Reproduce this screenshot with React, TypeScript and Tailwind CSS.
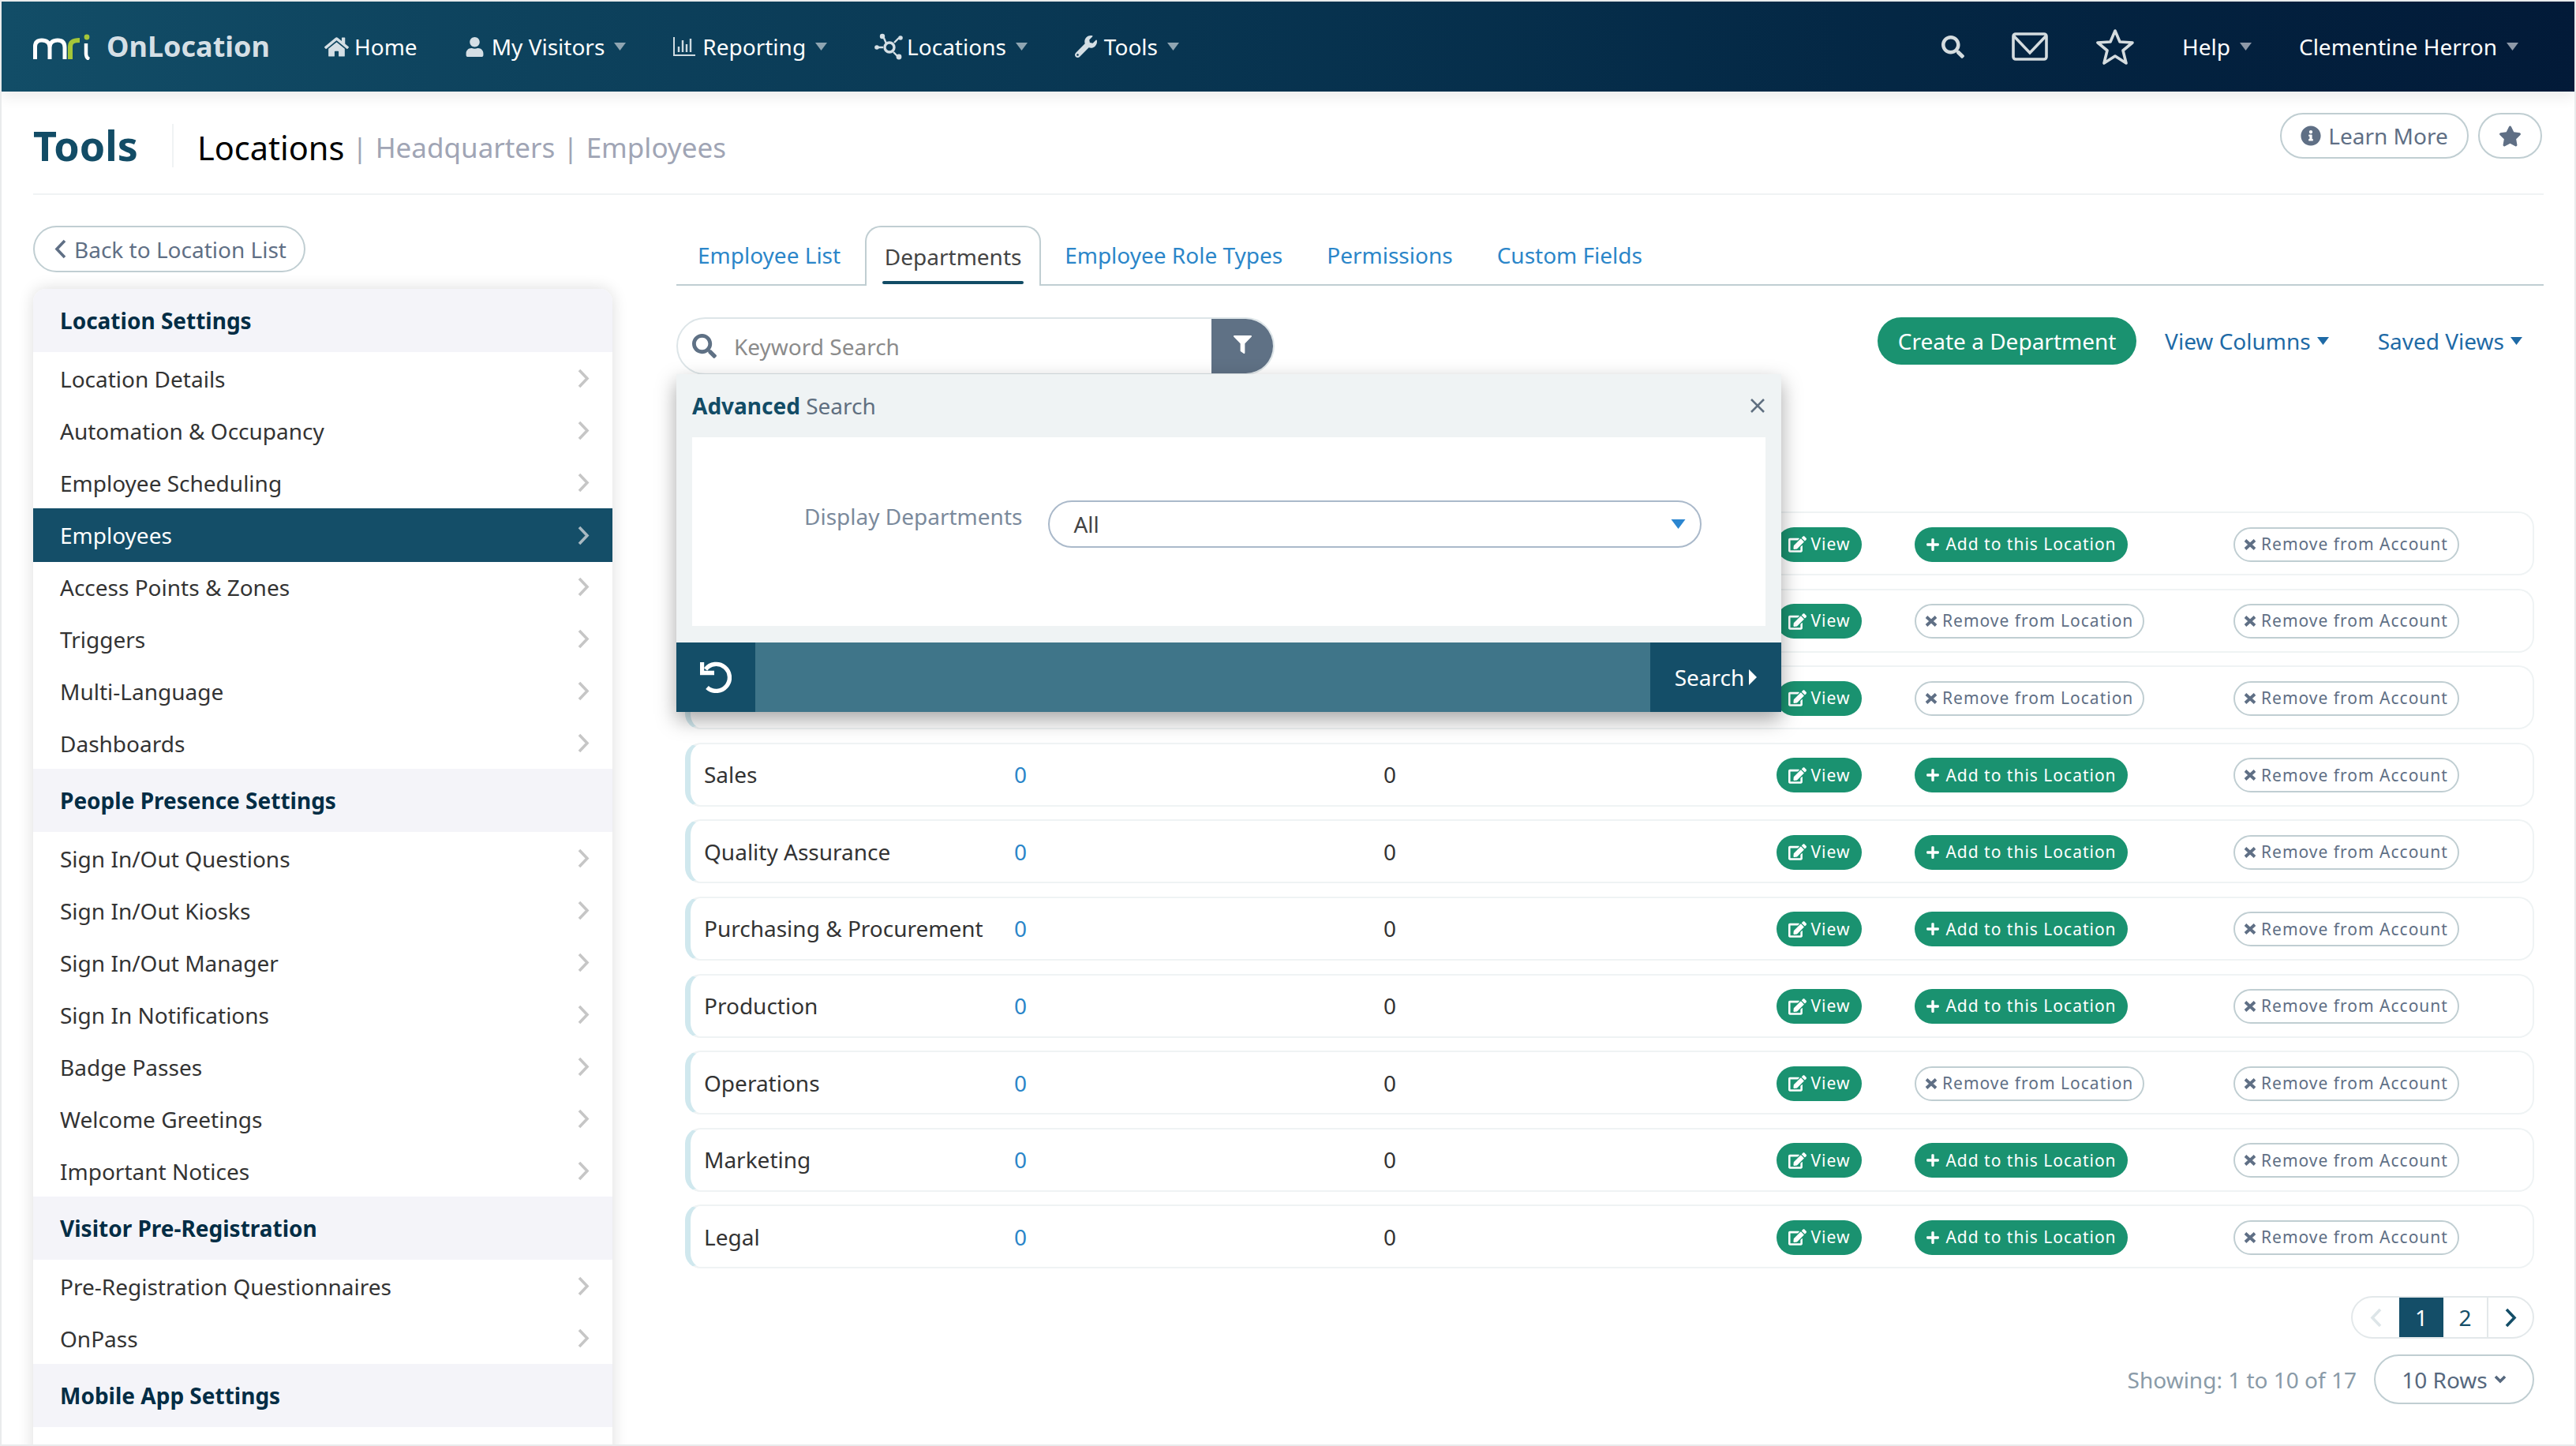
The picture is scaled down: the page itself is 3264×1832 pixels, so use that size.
import { FaEdit, FaFilter, FaHome, FaInfoCircle, FaPlus, FaSearch, FaStar, FaUser, FaWrench } from "react-icons/fa";

const Caret = ({ className }: { className: string }) => (
  <svg width="15" height="10" viewBox="0 0 15 10" className={className}>
    <path d="M0 0H15L7.5 10Z" fill="currentColor" />
  </svg>
);

const Angle = ({ className, left }: { className?: string; left?: boolean }) => (
  <svg width="16" height="25" viewBox="0 0 16 25" className={className}>
    <path d={left ? "M13 2L3 12.5L13 23" : "M3 2L13 12.5L3 23"} fill="none" stroke="currentColor" strokeWidth="3.6" />
  </svg>
);

const Logo = () => (
  <svg width="72" height="34" viewBox="0 0 72 34" fill="none">
    <path d="M2.5 33V17C2.5 11 6 9 11 9C17 9 21 12 21 18V33M21 18C21 12 25 9 31 9C37 9 40 12 40 18V33" stroke="#fff" strokeWidth="5" />
    <path d="M47 33V17C47 11 51 9 59 9" stroke="#a4c639" strokeWidth="6" />
    <path d="M67 13V26Q67 31 71 33" stroke="#fff" strokeWidth="4.5" />
    <circle cx="68" cy="5" r="3.4" fill="#a4c639" />
  </svg>
);

const ReportIcon = () => (
  <svg width="28" height="26" viewBox="0 0 28 26" fill="none" stroke="#cfdbe1" strokeWidth="2">
    <path d="M1 1V24H28" />
    <path d="M7 20V13M12 20V5M17 20V10M22 20V3" strokeWidth="2.4" />
  </svg>
);

const NetworkIcon = () => (
  <svg width="38" height="34" viewBox="0 0 38 34" fill="none" stroke="#d5dfe5" strokeWidth="2.4">
    <path d="M11 4L15 13M24 24L29 29M25 12L31 6M4 18H11" />
    <circle cx="19" cy="18" r="6" strokeWidth="3.4" />
    <circle cx="10" cy="4" r="3.2" fill="#d5dfe5" stroke="none" />
    <circle cx="33" cy="6" r="2.8" fill="#d5dfe5" stroke="none" />
    <circle cx="3" cy="18" r="2.8" fill="#d5dfe5" stroke="none" />
    <circle cx="31" cy="30" r="3.4" fill="#d5dfe5" stroke="none" />
  </svg>
);

const MailIcon = () => (
  <svg width="46" height="36" viewBox="0 0 46 36" fill="none" stroke="#d5dcdf" strokeWidth="3.6">
    <rect x="2" y="2" width="42" height="32" rx="3" />
    <path d="M3 5L23 26L43 5" />
  </svg>
);

const StarIcon = () => (
  <svg width="50" height="46" viewBox="0 0 50 46" fill="none" stroke="#d5dcdf" strokeWidth="3.6" strokeLinejoin="round">
    <path d="M25 3L31 17L47 18L35 28L39 44L25 35L11 44L15 28L3 18L19 17Z" />
  </svg>
);

const UndoIcon = () => (
  <svg width="40" height="40" viewBox="0 0 40 40" fill="none" stroke="#fff" strokeWidth="5.4">
    <path d="M2.5 1V14.5H18" />
    <path d="M7 10A17 17 0 1 1 9 33" />
  </svg>
);

const navItems = [
  { label: "Home", icon: <FaHome size={31} color="#d5dfe5" className="ml-[2px] -mr-[2px]" /> },
  { label: "My Visitors", icon: <FaUser size={25} color="#d5dfe5" />, menu: true },
  { label: "Reporting", icon: <ReportIcon />, menu: true },
  { label: "Locations", icon: <NetworkIcon />, menu: true, tight: true },
  { label: "Tools", icon: <FaWrench size={28} color="#d5dfe5" />, menu: true },
];

const sections = [
  {
    title: "Location Settings",
    items: ["Location Details", "Automation & Occupancy", "Employee Scheduling", "Employees", "Access Points & Zones", "Triggers", "Multi-Language", "Dashboards"],
  },
  {
    title: "People Presence Settings",
    items: ["Sign In/Out Questions", "Sign In/Out Kiosks", "Sign In/Out Manager", "Sign In Notifications", "Badge Passes", "Welcome Greetings", "Important Notices"],
  },
  {
    title: "Visitor Pre-Registration",
    items: ["Pre-Registration Questionnaires", "OnPass"],
  },
  { title: "Mobile App Settings", items: [] },
];

const tabs = ["Employee List", "Departments", "Employee Role Types", "Permissions", "Custom Fields"];

const rows = [
  { name: "", added: false },
  { name: "", added: true },
  { name: "", added: true },
  { name: "Sales", added: false },
  { name: "Quality Assurance", added: false },
  { name: "Purchasing & Procurement", added: false },
  { name: "Production", added: false },
  { name: "Operations", added: true },
  { name: "Marketing", added: false },
  { name: "Legal", added: false },
];

const pill = "mt-[2px] flex h-[44px] items-center rounded-full text-[21px] tracking-[1px] whitespace-nowrap";
const outlinePill = `${pill} border-2 border-[#c0ced2] bg-white text-[#5f6f85]`;

const RemoveButton = ({ label }: { label: string }) => (
  <div className={`${outlinePill} w-fit gap-[6px] pl-[11px] pr-[12px]`}>
    <svg width="16" height="14" viewBox="0 0 16 14" fill="none" stroke="currentColor" strokeWidth="3.8">
      <path d="M2 1.5L14 12.5M14 1.5L2 12.5" />
    </svg>
    {label}
  </div>
);

export default function App() {
  return (
    <div className="h-[1832px] w-[3264px] overflow-hidden bg-[#e9ebec] p-[2px] font-['Noto_Sans',sans-serif]">
      <div className="flex h-full flex-col overflow-hidden bg-white">
        <header className="relative z-10 flex h-[114px] shrink-0 items-center justify-between bg-gradient-to-r from-[#124d67] to-[#021a38] pl-[40px] pr-[71px] shadow-[0_8px_16px_rgba(0,0,0,0.07)]">
          <div className="flex items-center">
            <Logo />
            <span className="ml-[21px] w-[206px] text-[36px] font-bold whitespace-nowrap text-[#d5dfe5]">OnLocation</span>
            <nav className="ml-[68px] flex items-center gap-[60px]">
              {navItems.map((item) => (
                <div key={item.label} className="flex items-center text-[28px] text-white">
                  <span className={`flex items-center ${item.tight ? "mr-[3px]" : "mr-[9px]"}`}>{item.icon}</span>
                  {item.label}
                  {item.menu && <Caret className="ml-[12px] text-[#8fa5b2]" />}
                </div>
              ))}
            </nav>
          </div>
          <div className="flex items-center gap-[60px] text-[28px] text-white">
            <FaSearch size={29} color="#d5dcdf" />
            <MailIcon />
            <StarIcon />
            <div className="flex items-center gap-[12px]">
              Help
              <Caret className="text-[#8e99a8]" />
            </div>
            <div className="flex items-center gap-[12px]">
              Clementine Herron
              <Caret className="text-[#8e99a8]" />
            </div>
          </div>
        </header>

        <div className="flex min-h-0 flex-1 flex-col pl-[40px] pr-[39px]">
          <div className="flex h-[131px] shrink-0 items-start justify-between border-b-2 border-[#f0f3f4]">
            <div className="flex items-center pt-[38px]">
              <h1 className="text-[52px] leading-[60px] font-bold text-[#124c66]">Tools</h1>
              <div className="ml-[43px] h-[55px] w-[2px] bg-[#f0f3f4]" />
              <div className="ml-[30px] flex items-center pt-[6px] text-[35px] text-[#a0a5b5]">
                <span className="text-[41.5px] leading-[50px] text-black">Locations</span>
                <span className="mx-[10px]">|</span>
                <span>Headquarters</span>
                <span className="mx-[10px]">|</span>
                <span>Employees</span>
              </div>
            </div>
            <div className="flex gap-[12px] pt-[27px] pr-[2px]">
              <div className="flex h-[58px] w-[239px] items-center justify-center gap-[9px] rounded-full border-2 border-[#c0ced2] text-[28px] text-[#5f6f85]">
                <FaInfoCircle size={26} />
                Learn More
              </div>
              <div className="flex h-[58px] w-[81px] items-center justify-center rounded-full border-2 border-[#c0ced2] text-[#5f6f85]">
                <FaStar size={29} />
              </div>
            </div>
          </div>

          <div className="flex min-h-0 flex-1 gap-[81px] pt-[39px]">
            <aside className="w-[734px] shrink-0">
              <div className="flex h-[59px] w-[345px] items-center gap-[9px] rounded-full border-2 border-[#c0ced2] pl-[25px] text-[28px] text-[#5f6f85]">
                <Angle left className="shrink-0" />
                Back to Location List
              </div>
              <div className="mt-[21px] overflow-hidden rounded-t-[16px] shadow-[0_0_20px_rgba(0,0,0,0.14)]">
                {sections.map((section) => (
                  <div key={section.title}>
                    <div className="flex h-[80px] items-center bg-[#f4f4f9] pl-[34px] text-[28px] font-bold text-[#032d45]">
                      {section.title}
                    </div>
                    {section.items.map((item) => (
                      <div
                        key={item}
                        className={`flex items-center justify-between pl-[34px] pr-[29px] text-[28px] ${item === "Employees" ? "relative -mb-[2px] h-[68px] bg-[#144e68] text-white" : "h-[66px] bg-white pt-[1px] text-[#333]"}`}
                      >
                        {item}
                        <Angle className={item === "Employees" ? "text-[#a9b9c2]" : "text-[#c6c6c6]"} />
                      </div>
                    ))}
                  </div>
                ))}
                <div className="h-[40px] bg-white" />
              </div>
            </aside>

            <main className="min-w-0 flex-1">
              <div className="flex h-[76px] items-end gap-[4px] border-b-2 border-[#c0ced2] text-[28px] text-[#2b86c9]">
                {tabs.map((tab) =>
                  tab === "Departments" ? (
                    <div key={tab} className="relative -mb-[2px] flex h-[76px] w-[223px] items-center justify-center rounded-t-[20px] border-2 border-b-0 border-[#c0ced2] bg-white pb-[1px] text-[#444]">
                      {tab}
                      <div className="absolute right-[20px] bottom-[2px] left-[20px] h-[4px] rounded-[2px] bg-[#124c66]" />
                    </div>
                  ) : (
                    <div key={tab} className="flex h-[74px] items-center px-[26px] pb-[1px] first:px-[27px]">
                      {tab}
                    </div>
                  ),
                )}
              </div>

              <div className="relative mt-[40px] flex h-[73px] items-start justify-between">
                <div className="flex h-[73px] w-[758px] overflow-hidden rounded-full border-2 border-[#dde5e8]">
                  <div className="flex flex-1 items-center gap-[22px] pl-[18px] text-[28px] text-[#8b8b8b]">
                    <FaSearch size={31} color="#5f7185" />
                    Keyword Search
                  </div>
                  <div className="flex w-[78px] items-center justify-center bg-[#5f7185] pb-[4px] text-white">
                    <FaFilter size={23} />
                  </div>
                </div>
                <div className="flex items-center pr-[27px] text-[28px] text-[#1e6aa6]">
                  <div className="flex h-[60px] w-[328px] items-center justify-center rounded-full bg-[#1a9270] text-white">Create a Department</div>
                  <div className="ml-[36px] flex items-center gap-[8px]">
                    View Columns
                    <Caret />
                  </div>
                  <div className="ml-[62px] flex items-center gap-[8px]">
                    Saved Views
                    <Caret />
                  </div>
                </div>

                <div className="absolute top-[72px] left-0 z-10 flex h-[428px] w-[1400px] flex-col bg-[#eff3f4] shadow-[0_10px_24px_rgba(0,0,0,0.35)]">
                  <div className="flex h-[80px] items-center justify-between px-[20px] text-[28px] text-[#5f6f80]">
                    <div>
                      <span className="font-bold text-[#124c66]">Advanced</span> Search
                    </div>
                    <svg width="20" height="20" viewBox="0 0 20 20" fill="none" stroke="#5f6f80" strokeWidth="2.6">
                      <path d="M2 2L18 18M18 2L2 18" />
                    </svg>
                  </div>
                  <div className="mx-[20px] flex h-[239px] items-start gap-[33px] bg-white pt-[80px] pl-[142px]">
                    <span className="-mt-[1px] text-[28px] leading-[42px] text-[#7b8a9c]">Display Departments</span>
                    <div className="flex h-[60px] w-[828px] items-center justify-between rounded-full border-2 border-[#aab9ca] pr-[18px] pl-[30px] text-[28px] text-[#444]">
                      All
                      <Caret className="h-[12px] w-[19px] text-[#2b86d0]" />
                    </div>
                  </div>
                  <div className="mt-[21px] flex h-[88px] items-stretch justify-between bg-[#3f7589]">
                    <div className="flex w-[100px] items-center justify-center bg-[#144e68]">
                      <UndoIcon />
                    </div>
                    <div className="flex w-[166px] items-center justify-center gap-[6px] bg-[#144e68] text-[28px] text-white">
                      Search
                      <svg width="10" height="20" viewBox="0 0 10 20">
                        <path d="M0 0L10 10L0 20Z" fill="#fff" />
                      </svg>
                    </div>
                  </div>
                </div>
              </div>

              <div className="mt-[173px] ml-[11px] mr-[12px] flex flex-col gap-[16.6px]">
                {rows.map((row, i) => (
                  <div key={i} className="grid h-[81px] grid-cols-[393px_468px_498px_175px_404px_1fr] items-center rounded-[20px] border-2 border-l-[7px] border-[#eff3f4] border-l-[#d0e8ee] pl-[17px] text-[28px] text-[#333]">
                    <span className="whitespace-nowrap">{row.name}</span>
                    <span className="text-[#2b86c9]">0</span>
                    <span>0</span>
                    <div className={`${pill} w-[108px] justify-center gap-[6px] bg-[#1a9270] text-white`}>
                      <FaEdit size={23} />
                      View
                    </div>
                    {row.added ? (
                      <RemoveButton label="Remove from Location" />
                    ) : (
                      <div className={`${pill} w-[270px] justify-center gap-[7px] bg-[#1a9270] text-white`}>
                        <FaPlus size={18} />
                        Add to this Location
                      </div>
                    )}
                    <RemoveButton label="Remove from Account" />
                  </div>
                ))}
              </div>

              <div className="mt-[35px] mr-[12px] flex flex-col items-end gap-[20px]">
                <div className="flex h-[54px] w-[232px] items-stretch overflow-hidden rounded-full border-2 border-[#e3e8ea] text-[28px] text-[#144e68]">
                  <div className="flex w-[59px] items-center justify-center text-[#dde5e8]">
                    <Angle left />
                  </div>
                  <div className="flex w-[56px] items-center justify-center bg-[#144e68] text-white">1</div>
                  <div className="flex w-[57px] items-center justify-center border-r-2 border-[#e3e8ea]">2</div>
                  <div className="flex flex-1 items-center justify-center">
                    <Angle />
                  </div>
                </div>
                <div className="flex items-center gap-[22px]">
                  <span className="text-[28px] text-[#8a9ba8]">Showing: 1 to 10 of 17</span>
                  <div className="flex h-[63px] w-[203px] items-center justify-center gap-[8px] rounded-full border-2 border-[#c0ced2] text-[28px] text-[#56687e]">
                    10 Rows
                    <svg width="16" height="11" viewBox="0 0 16 11" fill="none" stroke="currentColor" strokeWidth="3.6">
                      <path d="M2 2L8 8L14 2" />
                    </svg>
                  </div>
                </div>
              </div>
            </main>
          </div>
        </div>
      </div>
    </div>
  );
}
